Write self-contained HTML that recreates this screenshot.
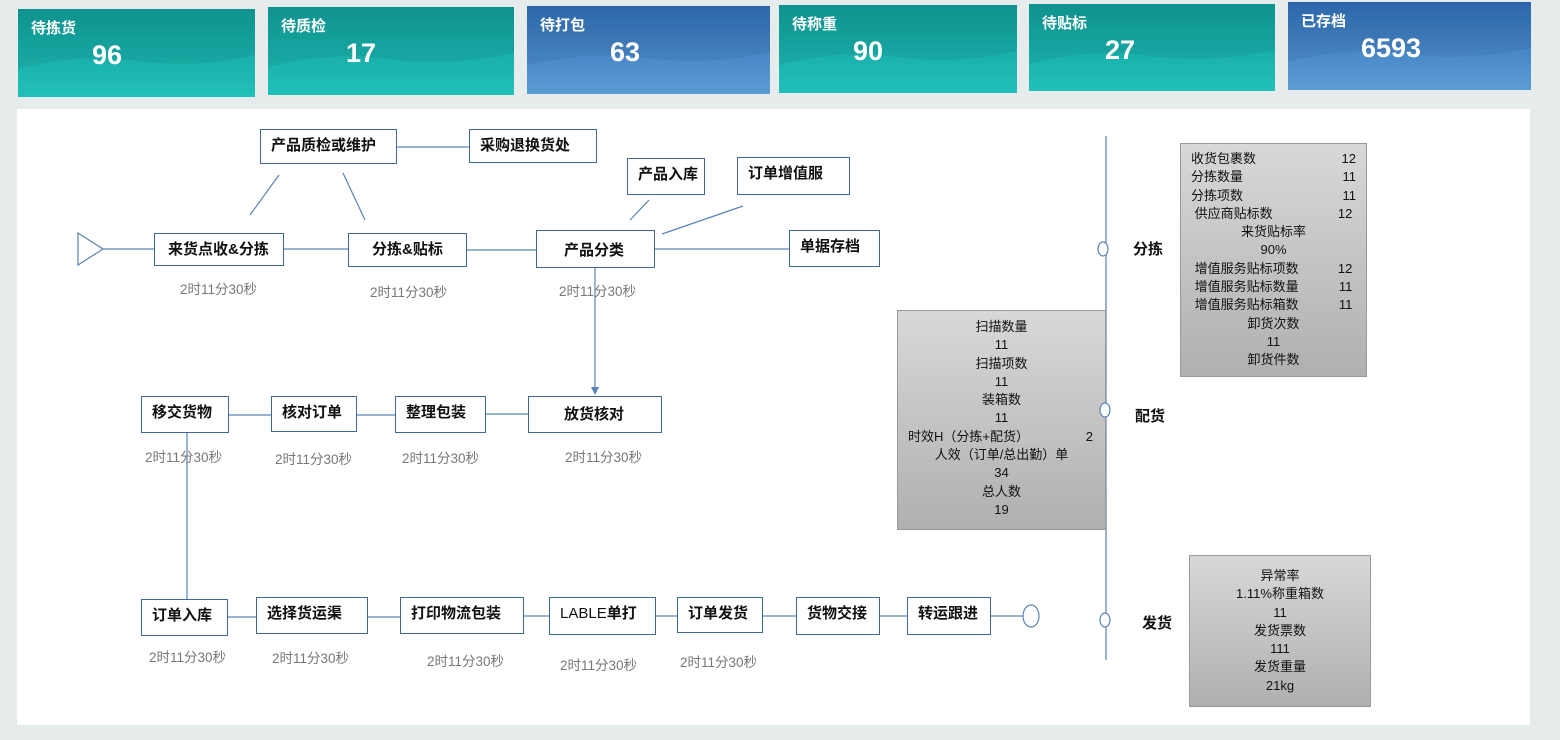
<!DOCTYPE html>
<html><head><meta charset="utf-8"><style>
*{margin:0;padding:0;box-sizing:border-box}
body{width:1560px;height:740px;background:#e6ecec;position:relative;overflow:hidden;font-family:"Liberation Sans","Noto Sans CJK SC",sans-serif}
.card{position:absolute;overflow:hidden;color:#fff}
.teal{background:linear-gradient(#0f9c98,#22c0ba)}
.blue{background:linear-gradient(#2f6db5,#5c9cd4)}
.card svg{position:absolute;left:0;top:0}
.card .t{position:absolute;left:13px;top:8px;font-size:15px;font-weight:bold}
.card .n{position:absolute;top:31px;font-size:27px;font-weight:bold}
.panel{position:absolute;left:17px;top:109px;width:1513px;height:616px;background:#fff}
.b{position:absolute;border:1.3px solid #41679a;background:#fff;font-size:15px;font-weight:bold;color:#111;padding:4px 0 0 10px;white-space:nowrap}
.tm{position:absolute;font-size:13.5px;color:#777;white-space:nowrap}
.g{position:absolute;border:1px solid #999;background:linear-gradient(#d8d8d8,#b0b0b0);font-size:13px;color:#111;line-height:18.3px;text-align:center}
.g .r{display:flex;justify-content:space-between;text-align:left}
.lab{position:absolute;font-size:15px;font-weight:bold;color:#111}
</style></head><body>

<div class="card teal" style="left:18px;top:9px;width:237px;height:88px"><svg width="237" height="88"><path d="M0 0 H237 V46 Q180 60 120 52 T0 60 Z" fill="#000" opacity=".06"/></svg><div class="t">待拣货</div><div class="n" style="left:74px">96</div></div>
<div class="card teal" style="left:268px;top:7px;width:246px;height:88px"><svg width="246" height="88"><path d="M0 0 H246 V46 Q180 60 120 52 T0 60 Z" fill="#000" opacity=".06"/></svg><div class="t">待质检</div><div class="n" style="left:78px">17</div></div>
<div class="card blue" style="left:527px;top:6px;width:243px;height:88px"><svg width="243" height="88"><path d="M0 0 H243 V46 Q180 60 120 52 T0 60 Z" fill="#000" opacity=".06"/></svg><div class="t">待打包</div><div class="n" style="left:83px">63</div></div>
<div class="card teal" style="left:779px;top:5px;width:238px;height:88px"><svg width="238" height="88"><path d="M0 0 H238 V46 Q180 60 120 52 T0 60 Z" fill="#000" opacity=".06"/></svg><div class="t">待称重</div><div class="n" style="left:74px">90</div></div>
<div class="card teal" style="left:1029px;top:4px;width:246px;height:87px"><svg width="246" height="87"><path d="M0 0 H246 V46 Q180 60 120 52 T0 60 Z" fill="#000" opacity=".06"/></svg><div class="t">待贴标</div><div class="n" style="left:76px">27</div></div>
<div class="card blue" style="left:1288px;top:2px;width:243px;height:88px"><svg width="243" height="88"><path d="M0 0 H243 V46 Q180 60 120 52 T0 60 Z" fill="#000" opacity=".06"/></svg><div class="t">已存档</div><div class="n" style="left:73px">6593</div></div>

<div class="panel"></div>

<svg style="position:absolute;left:0;top:0" width="1560" height="740">
<g stroke="#5a83b5" stroke-width="1.2" fill="none">
<polygon points="78,233 103,249 78,265"/>
<line x1="103" y1="249" x2="154" y2="249"/>
<line x1="284" y1="249" x2="348" y2="249"/>
<line x1="467" y1="250" x2="536" y2="250"/>
<line x1="655" y1="249" x2="789" y2="249"/>
<line x1="397" y1="147" x2="469" y2="147"/>
<line x1="279" y1="175" x2="250" y2="215"/>
<line x1="343" y1="173" x2="365" y2="220"/>
<line x1="649" y1="200" x2="630" y2="220"/>
<line x1="743" y1="206" x2="662" y2="234"/>
<line x1="595" y1="268" x2="595" y2="388"/>
<line x1="229" y1="415" x2="271" y2="415"/>
<line x1="357" y1="415" x2="395" y2="415"/>
<line x1="486" y1="414" x2="528" y2="414"/>
<line x1="187" y1="433" x2="187" y2="599"/>
<line x1="228" y1="617" x2="256" y2="617"/>
<line x1="368" y1="617" x2="400" y2="617"/>
<line x1="524" y1="616" x2="549" y2="616"/>
<line x1="656" y1="616" x2="677" y2="616"/>
<line x1="763" y1="616" x2="796" y2="616"/>
<line x1="880" y1="616" x2="907" y2="616"/>
<line x1="991" y1="616" x2="1023" y2="616"/>
<ellipse cx="1031" cy="616" rx="8" ry="11"/>
<line x1="1106" y1="136" x2="1106" y2="660"/>
</g>
<polygon points="591,387 599,387 595,395" fill="#5a83b5"/>
</svg>

<div class="b" style="left:260px;top:129px;width:137px;height:35px">产品质检或维护</div>
<div class="b" style="left:469px;top:129px;width:128px;height:34px">采购退换货处</div>
<div class="b" style="left:627px;top:158px;width:78px;height:37px">产品入库</div>
<div class="b" style="left:737px;top:157px;width:113px;height:38px">订单增值服</div>
<div class="b" style="left:154px;top:233px;width:130px;height:33px;padding-left:13px">来货点收&amp;分拣</div>
<div class="b" style="left:348px;top:233px;width:119px;height:34px;padding-left:23px">分拣&amp;贴标</div>
<div class="b" style="left:536px;top:230px;width:119px;height:38px;padding:8px 0 0 27px">产品分类</div>
<div class="b" style="left:789px;top:230px;width:91px;height:37px">单据存档</div>
<div class="tm" style="left:180px;top:278px">2时11分30秒</div>
<div class="tm" style="left:370px;top:281px">2时11分30秒</div>
<div class="tm" style="left:559px;top:280px">2时11分30秒</div>

<div class="b" style="left:141px;top:396px;width:88px;height:37px">移交货物</div>
<div class="b" style="left:271px;top:396px;width:86px;height:36px">核对订单</div>
<div class="b" style="left:395px;top:396px;width:91px;height:37px">整理包装</div>
<div class="b" style="left:528px;top:396px;width:134px;height:37px;padding:6px 0 0 35px">放货核对</div>
<div class="tm" style="left:145px;top:446px">2时11分30秒</div>
<div class="tm" style="left:275px;top:448px">2时11分30秒</div>
<div class="tm" style="left:402px;top:447px">2时11分30秒</div>
<div class="tm" style="left:565px;top:446px">2时11分30秒</div>

<div class="b" style="left:141px;top:599px;width:87px;height:37px">订单入库</div>
<div class="b" style="left:256px;top:597px;width:112px;height:37px">选择货运渠</div>
<div class="b" style="left:400px;top:597px;width:124px;height:37px">打印物流包装</div>
<div class="b" style="left:549px;top:597px;width:107px;height:38px;font-weight:normal">LABLE<b>单打</b></div>
<div class="b" style="left:677px;top:597px;width:86px;height:36px">订单发货</div>
<div class="b" style="left:796px;top:597px;width:84px;height:38px">货物交接</div>
<div class="b" style="left:907px;top:597px;width:84px;height:38px">转运跟进</div>
<div class="tm" style="left:149px;top:646px">2时11分30秒</div>
<div class="tm" style="left:272px;top:647px">2时11分30秒</div>
<div class="tm" style="left:427px;top:650px">2时11分30秒</div>
<div class="tm" style="left:560px;top:654px">2时11分30秒</div>
<div class="tm" style="left:680px;top:651px">2时11分30秒</div>

<div class="lab" style="left:1133px;top:238px">分拣</div>
<div class="lab" style="left:1135px;top:405px">配货</div>
<div class="lab" style="left:1142px;top:612px">发货</div>

<div class="g" style="left:1180px;top:143px;width:187px;height:234px;padding:6px 10px 0 10px">
<div class="r"><span>收货包裹数</span><span>12</span></div>
<div class="r"><span>分拣数量</span><span>11</span></div>
<div class="r"><span>分拣项数</span><span>11</span></div>
<div class="r"><span>&nbsp;供应商贴标数</span><span>12&nbsp;</span></div>
<div>来货贴标率</div><div>90%</div>
<div class="r"><span>&nbsp;增值服务贴标项数</span><span>12&nbsp;</span></div>
<div class="r"><span>&nbsp;增值服务贴标数量</span><span>11&nbsp;</span></div>
<div class="r"><span>&nbsp;增值服务贴标箱数</span><span>11&nbsp;</span></div>
<div>卸货次数</div><div>11</div><div>卸货件数</div>
</div>

<div class="g" style="left:897px;top:310px;width:209px;height:220px;padding-top:7px">
<div>扫描数量</div><div>11</div><div>扫描项数</div><div>11</div><div>装箱数</div><div>11</div>
<div class="r" style="padding:0 12px 0 10px"><span>时效H（分拣+配货）</span><span>2</span></div>
<div>人效（订单/总出勤）单</div><div>34</div><div>总人数</div><div>19</div>
</div>

<div class="g" style="left:1189px;top:555px;width:182px;height:152px;padding-top:11px">
<div>异常率</div><div>1.11%称重箱数</div><div>11</div><div>发货票数</div><div>111</div><div>发货重量</div><div>21kg</div>
</div>

<svg style="position:absolute;left:0;top:0" width="1560" height="740">
<g stroke="#5a83b5" stroke-width="1.2" fill="#fff">
<ellipse cx="1103" cy="249" rx="5" ry="7"/>
<ellipse cx="1105" cy="410" rx="5" ry="7"/>
<ellipse cx="1105" cy="620" rx="5" ry="7"/>
</g>
</svg>
</body></html>
